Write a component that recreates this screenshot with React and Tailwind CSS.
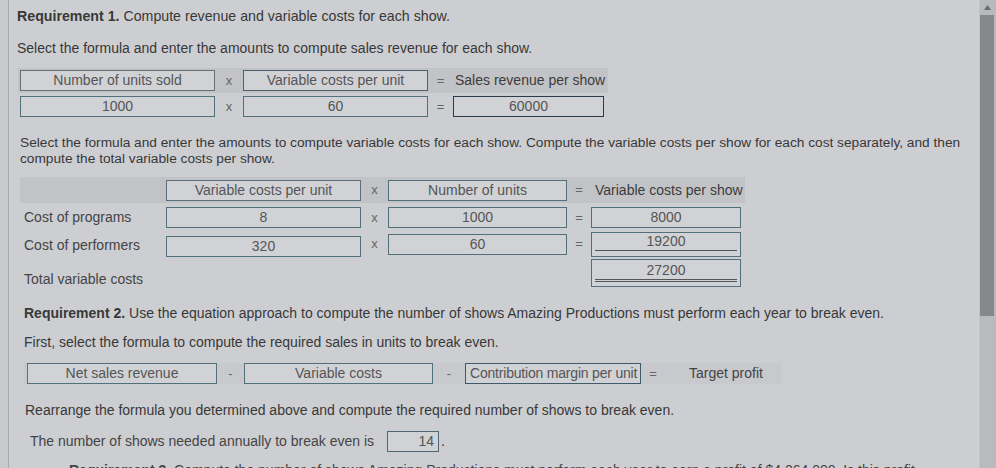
import React from 'react';

const font = "font-['Liberation_Sans',Arial,sans-serif]";

// A bordered answer cell, like the input/select boxes of the homework page
function Cell({ w, h = 'h-[21px]', children, align = 'text-center', border = 'border-[#52707c]', extra = '' }) {
  return (
    <div className={`${w} ${h} ${align} ${border} ${extra} border bg-[#d1d2d6] text-[#555] text-[14px] leading-[19px] px-1 shrink-0 whitespace-nowrap`}>
      {children}
    </div>
  );
}

function Op({ w, children }) {
  return <div className={`${w} shrink-0 text-center text-[13px] text-[#666]`}>{children}</div>;
}

function App() {
  return (
    <div className={`${font} relative w-[996px] h-[468px] overflow-hidden bg-[#cdced2] text-[#383838] flex`}>
      {/* left gutter of the frame */}
      <div className="w-[9px] shrink-0 border-r border-[#a9aaae] bg-[#c8c9cd]" />

      <div className="flex-1 flex flex-col text-[14px]">
        {/* Requirement 1 */}
        <p className="pt-[7px] pl-[8px] leading-[18px] text-[14.2px]">
          <span className="font-bold">Requirement 1.</span> Compute revenue and variable costs for each show.
        </p>
        <p className="mt-[14px] pl-[8px] leading-[18px]">
          Select the formula and enter the amounts to compute sales revenue for each show.
        </p>

        <div className="mt-[11px] ml-[9px] flex flex-col gap-[2px]">
          <div className="w-[590px] h-[25px] bg-[#c2c3c7] px-[2px] flex items-center">
            <Cell w="w-[195px]" border="border-[#6a6f74]">Number of units sold</Cell>
            <Op w="w-[28px]">x</Op>
            <Cell w="w-[185px]" border="border-[#4e5f6c]">Variable costs per unit</Cell>
            <Op w="w-[25px]">=</Op>
            <div className="pl-[2px] text-[14px] text-[#3c3c3c]">Sales revenue per show</div>
          </div>
          <div className="h-[23px] px-[2px] flex items-center">
            <Cell w="w-[195px]">1000</Cell>
            <Op w="w-[28px]">x</Op>
            <Cell w="w-[185px]">60</Cell>
            <Op w="w-[25px]">=</Op>
            <Cell w="w-[151px]" border="border-[#2c3b4a]" extra="text-[#3a3a3a]">60000</Cell>
          </div>
        </div>

        {/* variable costs */}
        <p className="mt-[17px] pl-[11px] leading-[16px] text-[13.7px] whitespace-nowrap">
          Select the formula and enter the amounts to compute variable costs for each show. Compute the variable costs per show for each cost separately, and then
          <br />
          compute the total variable costs per show.
        </p>

        <div className="mt-[10px] ml-[11px] flex flex-col">
          <div className="w-[725px] h-[26px] bg-[#c2c3c7] flex items-center">
            <div className="w-[146px] shrink-0" />
            <Cell w="w-[195px]" border="border-[#5b6f7a]">Variable costs per unit</Cell>
            <Op w="w-[27px]">x</Op>
            <Cell w="w-[179px]">Number of units</Cell>
            <Op w="w-[24px]">=</Op>
            <div className="pl-[4px] text-[14px] text-[#3c3c3c]">Variable costs per show</div>
          </div>

          <div className="mt-[3px] h-[23px] flex items-center">
            <div className="w-[146px] shrink-0 pl-[4px] text-[14px] text-[#444]">Cost of programs</div>
            <Cell w="w-[195px]">8</Cell>
            <Op w="w-[27px]">x</Op>
            <Cell w="w-[179px]">1000</Cell>
            <Op w="w-[24px]">=</Op>
            <Cell w="w-[150px]">8000</Cell>
          </div>

          <div className="mt-[2px] h-[26px] flex items-center">
            <div className="w-[146px] shrink-0 pl-[4px] pt-[2px] text-[14px] text-[#444]">Cost of performers</div>
            <Cell w="w-[195px]" extra="mt-[4px]">320</Cell>
            <Op w="w-[27px]">x</Op>
            <Cell w="w-[179px]">60</Cell>
            <Op w="w-[24px]">=</Op>
            <div className="w-[150px] h-[25px] shrink-0 border border-[#52707c] bg-[#d1d2d6] px-[3px] pt-[1px]">
              <div className="h-[17px] border-b border-[#555] text-center text-[14px] leading-[15px] text-[#555]">19200</div>
            </div>
          </div>

          <div className="mt-[2px] h-[28px] flex items-end">
            <div className="w-[146px] shrink-0 pl-[4px] text-[14px] text-[#444] leading-[16px]">Total variable costs</div>
            <div className="w-[425px] shrink-0" />
            <div className="w-[150px] h-[28px] shrink-0 border border-[#52707c] bg-[#d1d2d6] px-[3px] pt-[2px]">
              <div className="h-[20px] border-b-[3px] border-double border-[#555] text-center text-[14px] leading-[16px] text-[#555]">27200</div>
            </div>
          </div>
        </div>

        {/* Requirement 2 */}
        <p className="mt-[17px] pl-[15px] leading-[18px]">
          <span className="font-bold">Requirement 2.</span> Use the equation approach to compute the number of shows Amazing Productions must perform each year to break even.
        </p>
        <p className="mt-[11px] pl-[15px] leading-[18px]">
          First, select the formula to compute the required sales in units to break even.
        </p>

        <div className="mt-[12px] ml-[15px] w-[758px] h-[27px] bg-[#c8c9cd] pl-[3px] flex items-center">
          <Cell w="w-[190px]">Net sales revenue</Cell>
          <Op w="w-[27px]">-</Op>
          <Cell w="w-[189px]">Variable costs</Cell>
          <Op w="w-[32px]">-</Op>
          <Cell w="w-[176px]" border="border-[#3f5a6a]" align="text-left" extra="tracking-[-0.2px]">Contribution margin per unit</Cell>
          <Op w="w-[24px]">=</Op>
          <div className="pl-[24px] text-[14px] text-[#444]">Target profit</div>
        </div>

        <p className="mt-[17px] pl-[16px] leading-[18px]">
          Rearrange the formula you determined above and compute the required number of shows to break even.
        </p>

        <div className="mt-[12px] pl-[21px] h-[22px] flex items-center text-[14px]">
          <span className="w-[357px] shrink-0 text-[#444]">The number of shows needed annually to break even is</span>
          <Cell w="w-[52px]" align="text-right" border="border-[#4d6874]">14</Cell>
          <span className="pl-[2px]">.</span>
        </div>

        <p className="mt-[9px] pl-[60px] leading-[18px] whitespace-nowrap text-[#444]">
          <span className="font-bold">Requirement 3.</span> Compute the number of shows Amazing Productions must perform each year to earn a profit of $4,264,000. Is this profit
        </p>
      </div>

      {/* scroll bar */}
      <div className="w-[17px] shrink-0 bg-[#b9babe] border-l border-[#c4c5c9] flex flex-col items-start">
        <div className="h-[15px] w-[14px] flex items-center justify-center">
          <svg width="7" height="5" viewBox="0 0 7 5"><path d="M0 5 L3.5 0 L7 5 Z" fill="#6b6c70" /></svg>
        </div>
        <div className="w-[14px] h-[301px] bg-[#86878b]" />
      </div>
    </div>
  );
}

export default App;
